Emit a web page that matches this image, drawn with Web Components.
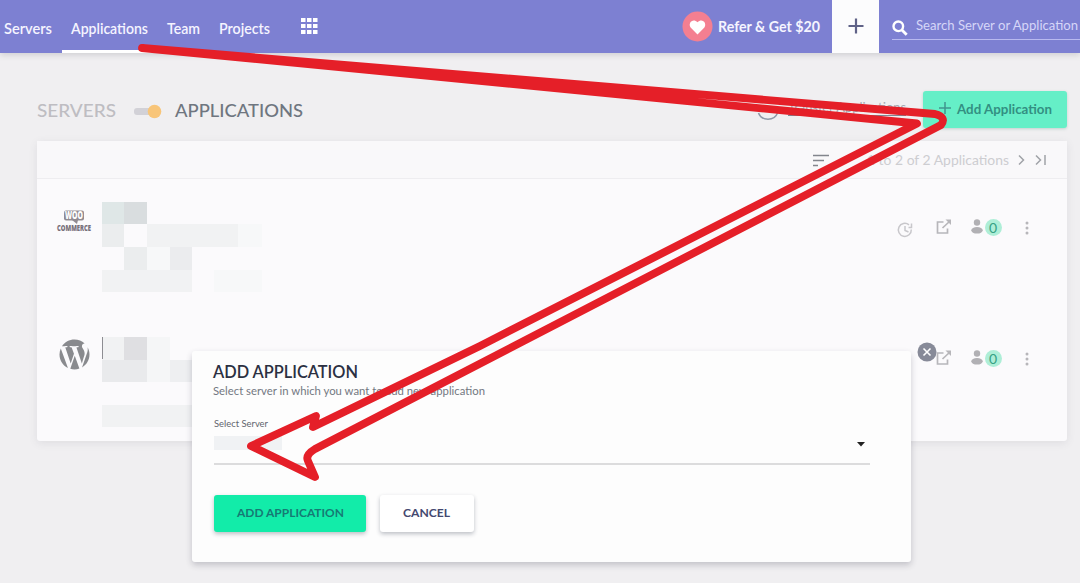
<!DOCTYPE html>
<html lang="en">
<head>
<meta charset="utf-8">
<title>Applications</title>
<style>
html, body {
	margin:0;
	height:100%;
	overflow:hidden;
	background:#f0eff1;
	font-family:Lato, "Liberation Sans", sans-serif;
}
</style>
</head>
<body>
<cw-page></cw-page>
<script>
const define = (name, html) => customElements.define(name, class extends HTMLElement {
	connectedCallback() {
		if (this.shadowRoot) {
			return;
		}
		const template = document.createElement('template');
		template.innerHTML = html;
		this.attachShadow({mode: 'open'}).appendChild(template.content.cloneNode(true));
	}
});

// One line of text, stretched to the width given in the w attribute
customElements.define('cw-text', class extends HTMLElement {
	connectedCallback() {
		this.attachShadow({mode: 'open'}).innerHTML = `
		<style>
		:host { display:block; white-space:nowrap; flex:none; width:${this.getAttribute('w')}px; }
		svg { display:block; overflow:visible; width:100%; height:1.2em; }
		text { fill:currentColor; font-size:1em; }
		</style>
		<svg><text y=".95em" textLength="${this.getAttribute('w')}" lengthAdjust="spacingAndGlyphs">${this.textContent}</text></svg>`;
	}
});

define('cw-nav', `
	<style>
	:host {
		display:flex;
		position:relative;
		z-index:1;
		height:53px;
		color:#f5f4ff;
		background:#7d80d2;
		box-shadow:0 2px 6px rgba(60,60,80,.18);
		font-size:14.5px;
		font-weight:600;
	}
	nav { display:flex; width:682px; flex:none; }
	nav > span { box-sizing:border-box; padding:19.5px 9.5px 0; height:53px; }
	nav > span:first-child { padding-left:4px; }
	nav > .active { border-bottom:3px solid #fff; }
	.grid { padding:18px 0 0 21px; }
	.refer { display:flex; width:150px; padding-top:11px; box-sizing:border-box; flex:none; gap:5px; }
	.refer cw-text { margin-top:7px; }
	.plus { width:47px; flex:none; background:#fcfcfd; display:flex; justify-content:center; padding-top:18px; box-sizing:border-box; }
	.search { display:flex; gap:8px; margin:0 0 0 13px; height:40px; flex:1; border-bottom:1px solid #b9baf0; box-sizing:border-box; padding-top:17.5px; font-size:13px; color:#d6d6f8; }
	.search svg { margin-top:2.5px; }
	svg { display:block; flex:none; }
	</style>
	<nav>
		<span><cw-text w="48">Servers</cw-text></span>
		<span class="active"><cw-text w="77">Applications</cw-text></span>
		<span><cw-text w="33">Team</cw-text></span>
		<span><cw-text w="51">Projects</cw-text></span>
		<svg class="grid" width="17" height="16" fill="#fff"><path d="M0 0h4.5v4H0zM6 0h4.5v4H6zM12 0h4.5v4H12zM0 6h4.5v4H0zM6 6h4.5v4H6zM12 6h4.5v4H12zM0 12h4.5v4H0zM6 12h4.5v4H6zM12 12h4.5v4H12z"/></svg>
	</nav>
	<div class="refer">
		<svg width="31" height="31" viewBox="0 0 31 31"><circle cx="15.5" cy="15.5" r="15" fill="#f47f91"/><path d="M15.500 23.500 8.600 16.400C5.600 12 11 6.500 15.500 11.200 20 6.500 25.400 12 22.400 16.400Z" fill="#fff"/></svg>
		<cw-text w="102" style="font-weight:700">Refer &amp; Get $20</cw-text>
	</div>
	<div class="plus"><svg width="16" height="16"><path d="M8 .5v15M.5 8h15" stroke="#5f6287" stroke-width="2.200"/></svg></div>
	<div class="search">
		<svg width="16" height="16"><circle cx="6.300" cy="6.300" r="4.800" fill="none" stroke="#fff" stroke-width="2.400"/><path d="m9.700 9.700 5 5" stroke="#fff" stroke-width="2.800"/></svg>
		<cw-text w="162" style="font-weight:400">Search Server or Application</cw-text>
	</div>`);

define('cw-heading', `
	<style>
	:host { display:flex; height:88px; padding:0 13px 0 37px; color:#6f7680; font-size:18px; box-sizing:border-box; align-items:flex-start; }
	cw-text { margin-top:47px; }
	.off { color:#bebdc2; }
	.toggle { margin:51px 13px 0 18px; }
	.link { display:flex; margin:48px 16px 0 auto; gap:9px; width:150px; font-size:13px; color:#a3a9b1; }
	.link cw-text { margin-top:-1px; height:15px; border-bottom:1px solid #7d8792; }
	.add { display:flex; width:144px; height:37px; margin-top:38px; border-radius:3px; background:#65efc7; color:#338f82; box-shadow:0 1px 3px rgba(50,120,100,.25); font-size:13px; font-weight:700; }
	.add svg { margin:11px 6px 0 16px; }
	.add cw-text { margin-top:10.500px; }
	svg { display:block; flex:none; }
	</style>
	<cw-text class="off" w="79" style="font-weight:500">SERVERS</cw-text>
	<svg class="toggle" width="28" height="15"><rect y="4" width="20" height="7" rx="3" fill="#d2d1d7"/><circle cx="20.500" cy="7.500" r="6.800" fill="#f8c579"/></svg>
	<cw-text w="128" style="font-weight:500">APPLICATIONS</cw-text>
	<div class="link">
		<svg width="22" height="22" fill="none" stroke="#8f99a8" stroke-width="1.500"><path d="M1.500 12a10 9 0 0 0 19 0"/></svg>
		<cw-text w="118">Transfer Applications</cw-text>
	</div>
	<div class="add">
		<svg width="12" height="12"><path d="M6 0v12M0 6h12" stroke="#40958e" stroke-width="1.500"/></svg>
		<cw-text w="95">Add Application</cw-text>
	</div>`);

define('cw-card', `
	<style>
	:host { display:block; width:1030px; height:300px; margin-left:37px; border-radius:3px; background:#fbfafc; box-shadow:0 2px 8px rgba(70,70,90,.1); }
	header { display:flex; height:38px; border-bottom:1px solid #eeedf0; box-sizing:border-box; background:#f9f8fa; color:#cdcdd1; font-size:12.5px; }
	header .sort { margin:13px 0 0 776px; }
	header cw-text { margin:11.5px 0 0 37px; }
	header .pager { margin:13px 0 0 9px; }
	svg { display:block; flex:none; }
	</style>
	<header>
		<svg class="sort" width="17" height="13"><path d="M0 1.500h16M0 6.500h11M0 11.500h5" stroke="#82858d" stroke-width="1.600"/></svg>
		<cw-text w="142">1 to 2 of 2 Applications</cw-text>
		<svg class="pager" width="29" height="12" fill="none" stroke="#a0a2a8" stroke-width="1.500"><path d="m1 1.500 4.500 4.500L1 10.500M18 1.500 22.500 6 18 10.500M27 1v10"/></svg>
	</header>
	<slot></slot>`);

define('cw-row', `
	<style>
	:host { display:flex; height:131px; padding:23px 0 0 20px; box-sizing:border-box; }
	.logo { width:35px; flex:none; }
	.mosaic { width:164px; margin:0 631px 0 10px; flex:none; }
	svg { display:block; flex:none; overflow:visible; }
	.tools { display:flex; color:#b7b6ba; padding-top:17px; }
	.clock { margin:3px 22px 0 0; }
	:host([covered]) .clock { visibility:hidden; }
	.badge { width:17px; height:17px; border-radius:50%; background:#aeeed7; color:#35a184; font-size:14px; line-height:17px; text-align:center; flex:none; }
	</style>
	<div class="logo"><slot name="logo"></slot></div>
	<div class="mosaic"><slot name="mosaic"></slot></div>
	<div class="tools">
		<svg class="clock" width="17" height="17" fill="none" stroke="#c8c7cb" stroke-width="1.500"><path d="M14.300 7.500a6.500 6.500 0 1 1-2.300-4.600"/><path d="M11.500 5.500h3V1.500M8 4v4.500l3.500 1.500"/></svg>
		<svg width="16" height="15" style="margin:0 18.500px 0 0" fill="none" stroke="#b7b6ba" stroke-width="1.700"><path d="M7.500 3H1.500v11h10V9.500"/><path d="m6.500 9 7.500-7"/><path d="M9.500 .5H15V6z" fill="#b7b6ba" stroke="none"/></svg>
		<svg width="12" height="15" style="margin-right:2px" fill="#b1b0b4"><circle cx="6" cy="3.500" r="3.200"/><ellipse cx="6" cy="11.300" rx="5.700" ry="3.300"/></svg>
		<div class="badge">0</div>
		<svg width="4" height="14" style="margin:2px 0 0 23px" fill="#b7b6ba"><circle cx="2" cy="2" r="1.500"/><circle cx="2" cy="7" r="1.500"/><circle cx="2" cy="12" r="1.500"/></svg>
	</div>`);

define('cw-dialog', `
	<style>
	:host { display:block; position:absolute; left:192px; top:351px; width:719px; height:211px; box-sizing:border-box; padding:11px 0 0 22px; background:#fdfdfd; border-radius:3px; box-shadow:0 3px 6px rgba(50,50,70,.24); color:#2b3042; }
	.close { position:absolute; left:725px; top:-9px; }
	h2 { margin:0 0 0 -1px; font-size:16.500px; font-weight:600; line-height:1; }
	.sub { font-size:11px; color:#737882; margin:3px 0 0 -1px; }
	.label { font-size:9.500px; color:#62656d; margin-top:20.500px; }
	.field { display:flex; justify-content:space-between; width:656px; height:35px; border-bottom:2px solid #dcdcdd; box-sizing:border-box; }
	.value { width:68px; height:14px; margin-top:6px; background:#f0f2f4; }
	.field svg { margin:12px 5px 0 0; }
	.buttons { display:flex; gap:14px; margin-top:30px; font-size:12px; font-weight:700; }
	.buttons div { height:37px; border-radius:3px; box-sizing:border-box; padding-top:11.500px; box-shadow:0 2px 4px rgba(40,50,70,.3); }
	.ok { width:152px; padding-left:23px; background:#12eca9; color:#167a74; }
	.no { width:94px; padding-left:23px; background:#fff; color:#444870; }
	</style>
	<svg class="close" width="20" height="20"><circle cx="10" cy="10" r="9.500" fill="#878a98"/><path d="m6.500 6.500 7 7m0-7-7 7" stroke="#fff" stroke-width="1.600"/></svg>
	<h2><cw-text w="145">ADD APPLICATION</cw-text></h2>
	<div class="sub"><cw-text w="272">Select server in which you want to add new application</cw-text></div>
	<div class="label"><cw-text w="54">Select Server</cw-text></div>
	<div class="field"><div class="value"></div><svg width="8" height="5"><path d="M0 0h8L4 4.500z" fill="#222"/></svg></div>
	<div class="buttons">
		<div class="ok"><cw-text w="107">ADD APPLICATION</cw-text></div>
		<div class="no"><cw-text w="47">CANCEL</cw-text></div>
	</div>`);

// Hand drawn arrow that runs over the whole page
define('cw-arrow', `
	<style>
	:host { display:block; position:absolute; left:0; top:0; z-index:3; pointer-events:none; }
	svg { display:block; }
	path { fill:none; stroke:#e51f28; stroke-width:7.800; stroke-linejoin:round; stroke-linecap:round; }
	</style>
	<svg width="1080" height="583">
		<path d="M142 48 935 114Q947 117 941 125L315 449Q305 455 308 461L315 477 251 446 316 416 313 427 480 346 917 123.500Z"/>
	</svg>`);

define('cw-page', `
	<style>
	:host { display:block; position:relative; width:1080px; height:583px; overflow:hidden; background:#f0eff1; }
	svg { display:block; overflow:visible; }
	text { font-family:"Open Sans", sans-serif; font-weight:800; }
	</style>
	<cw-nav></cw-nav>
	<cw-heading></cw-heading>
	<cw-card>
		<cw-row>
			<svg slot="logo" width="35" height="35"><rect x="7" y="8.500" width="20" height="10" rx="2" fill="#918b92"/><path d="m15 18 5 4 1-4z" fill="#918b92"/><text x="8" y="17.200" font-size="10" fill="#fff" textLength="18" lengthAdjust="spacingAndGlyphs">WOO</text><text x="0" y="29" font-size="8" fill="#77707a" textLength="34" lengthAdjust="spacingAndGlyphs">COMMERCE</text></svg>
			<svg slot="mosaic" width="164" height="90" shape-rendering="crispEdges"><path fill="#dfe7e7" d="M0 0h22v22H0z"/><path fill="#d9dddf" d="M22 0h23v22H22z"/><path fill="#ebedee" d="M0 22h22v23H0zM22 45h23v23H22z"/><path fill="#f1f2f3" d="M45 22h91v23H45zM0 68h90v22H0z"/><path fill="#ebecee" d="M68 45h22v23H68z"/><path fill="#f7f8f9" d="M45 45h23v23H45zM136 22h24v23h-24zM112 68h48v22h-48z"/></svg>
		</cw-row>
		<cw-row covered>
			<svg slot="logo" width="31" height="31" viewBox="7 7 108.500 108.500" style="margin:6px 0 0 2px" fill="#898a8e"><path d="M8.700 61.300c0 20.800 12.100 38.700 29.600 47.300L13.300 39.900C10.300 46.400 8.700 53.700 8.700 61.300zM96.700 58.600c0-6.500-2.300-11-4.300-14.500-2.700-4.300-5.200-8-5.200-12.300 0-4.800 3.700-9.300 8.900-9.300h.7C87.400 13.900 74.900 8.700 61.300 8.700c-18.400 0-34.500 9.400-43.900 23.700h3.400c5.500 0 14-.7 14-.7 2.800-.2 3.200 4 .3 4.300 0 0-2.900.3-6 .5L48 93l11.400-34.100-8.100-22.200c-2.800-.2-5.500-.5-5.500-.5-2.800-.2-2.500-4.500.3-4.300 0 0 8.600.7 13.700.7 5.500 0 14-.7 14-.7 2.800-.2 3.100 4 .3 4.300 0 0-2.900.3-6 .5l18.900 56.100 5.200-17.400c2.400-7.300 4.500-12.500 4.500-16.800zM62.200 65.900l-15.700 45.500c4.700 1.400 9.600 2.100 14.700 2.100 6.100 0 11.900-1 17.300-3L78 109.700zM107.200 36.300c.2 1.700.4 3.500.4 5.400 0 5.300-1 11.200-4 18.700l-16 46.200c15.600-9.100 26.100-26 26.100-45.300.1-9.100-2.300-17.600-6.500-25z"/></svg>
			<svg slot="mosaic" width="164" height="90" shape-rendering="crispEdges"><path fill="#f1f2f3" d="M0 4h22v23H0zM0 72h90v22H0z"/><path fill="#dfdfe2" d="M22 4h23v23H22z"/><path fill="#e9eaec" d="M0 27h45v22H0z"/><path fill="#f5f6f7" d="M45 4h23v45H45z"/><path fill="#eeeff1" d="M68 27h22v22H68z"/><path d="M0 4v22" stroke="#8d8d92"/></svg>
		</cw-row>
	</cw-card>
	<cw-dialog></cw-dialog>
	<cw-arrow></cw-arrow>`);
</script>
</body>
</html>
